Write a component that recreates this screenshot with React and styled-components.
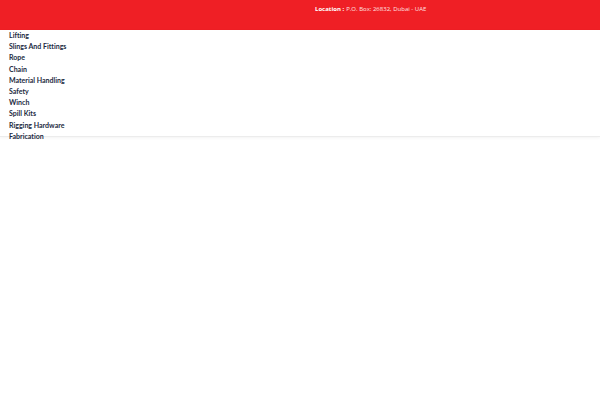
import styled, { createGlobalStyle } from "styled-components"

const GlobalStyle = createGlobalStyle`
*{
    box-sizing:border-box;
}
body{
    margin:0;
    background:#fff;
    font-family:Lato, "Open Sans", sans-serif;
    font-size:7px;
    font-variant-ligatures:none;
    line-height:11px;
}
`

const Page = styled.div`
min-height:100vh;
`

const TopBar = styled.div`
display:grid;
grid-template-columns:1fr 1fr;
min-height:30px;
padding:3px 9px 0;
background:#ef1f25;
color:#fff;
`

const Location = styled.p`
grid-column:2;
margin:0;
padding-left:15px;
font-family:"Open Sans", sans-serif;
font-size:6px;
line-height:12px;
color:#ffe3e3;
strong{
    margin-right:2px;
    font-weight:700;
    color:#fff;
}
`

const Header = styled.header`
height:107px;
border-bottom:1px solid #ececec;
box-shadow:0 1px 3px rgba(0, 0, 0, 0.05);
`

const Menu = styled.ul`
display:grid;
grid-auto-rows:1fr;
min-height:112px;
margin:0;
padding:0 9px;
list-style:none;
`

const MenuLink = styled.a`
display:block;
width:fit-content;
color:#1b2a41;
font-weight:700;
text-decoration:none;
`

const categories = [
    "Lifting",
    "Slings And Fittings",
    "Rope",
    "Chain",
    "Material Handling",
    "Safety",
    "Winch",
    "Spill Kits",
    "Rigging Hardware",
    "Fabrication",
]

export default function App() {
    return (
        <Page>
            <GlobalStyle />
            <TopBar>
                <Location>
                    <strong>Location :</strong>
                    P.O. Box: 26832, Dubai - UAE
                </Location>
            </TopBar>
            <Header>
                <nav>
                    <Menu>
                        {categories.map((name) => (
                            <li key={name}>
                                <MenuLink href="#">{name}</MenuLink>
                            </li>
                        ))}
                    </Menu>
                </nav>
            </Header>
        </Page>
    )
}
